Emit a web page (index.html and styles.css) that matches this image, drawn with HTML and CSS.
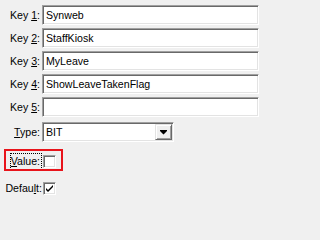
FILE: index.html
```html
<!DOCTYPE html>
<html>
<head>
<meta charset="utf-8">
<link rel="stylesheet" href="styles.css">
</head>
<body>
<div class="form">
  <label class="lbl">Key <u>1</u>:</label>
  <div class="field">Synweb</div>
  <label class="lbl">Key <u>2</u>:</label>
  <div class="field">StaffKiosk</div>
  <label class="lbl">Key <u>3</u>:</label>
  <div class="field">MyLeave</div>
  <label class="lbl">Key <u>4</u>:</label>
  <div class="field">ShowLeaveTakenFlag</div>
  <label class="lbl">Key <u>5</u>:</label>
  <div class="field"></div>
  <label class="lbl type-lbl"><u>T</u>ype:</label>
  <div class="select">
    <span class="select-text">BIT</span>
    <span class="drop">
      <svg width="7" height="5" viewBox="0 0 7 5"><path d="M0 0h7v1H0zM0 1h7L3.5 4.5z" fill="#000"/></svg>
    </span>
  </div>
  <label class="lbl value-lbl"><span class="focus"><u>V</u>alue:</span></label>
  <div class="check-cell value-cell"><span class="check"></span><span class="highlight"></span></div>
  <label class="lbl default-lbl">Defau<u>l</u>t:</label>
  <div class="check-cell default-cell">
    <span class="check">
      <svg width="9" height="9" viewBox="0 0 9 9"><path d="M1 4l2 2 5-5v2L3 8 1 6z" fill="#000"/></svg>
    </span>
  </div>
</div>
</body>
</html>
```
FILE: styles.css
```css
html, body {
  margin: 0;
  padding: 0;
  background: #f0f0f0;
}
body {
  font-family: "Liberation Sans", Arial, sans-serif;
  font-size: 10.6px;
  color: #000;
  width: 262px;
  height: 200px;
  overflow: hidden;
}
.form {
  display: grid;
  grid-template-columns: 40px 217px;
  column-gap: 2px;
  row-gap: 3px;
  padding-top: 5px;
  position: relative;
}
.lbl {
  text-align: right;
  height: 20px;
  line-height: 20px;
  white-space: nowrap;
}
.field {
  box-sizing: border-box;
  height: 20px;
  background: #fff;
  border-top: 1px solid #a0a0a0;
  border-left: 1px solid #a0a0a0;
  border-right: 1px solid #fff;
  border-bottom: 1px solid #fff;
  box-shadow: inset 1px 1px 0 #696969, inset -1px -1px 0 #e3e3e3;
  padding-left: 3px;
  line-height: 18px;
}
.type-lbl { margin-top: 2px; }
.select {
  margin-top: 2px;
  box-sizing: border-box;
  width: 132px;
  height: 20px;
  background: #fff;
  border-top: 1px solid #a0a0a0;
  border-left: 1px solid #a0a0a0;
  border-right: 1px solid #fff;
  border-bottom: 1px solid #fff;
  box-shadow: inset 1px 1px 0 #696969, inset -1px -1px 0 #e3e3e3;
  display: flex;
  align-items: center;
  padding: 1px;
}
.select-text {
  flex: 1;
  padding-left: 2px;
  line-height: 16px;
}
.drop {
  box-sizing: border-box;
  width: 17px;
  height: 16px;
  background: #f0f0f0;
  border-top: 1px solid #e3e3e3;
  border-left: 1px solid #e3e3e3;
  border-right: 1px solid #696969;
  border-bottom: 1px solid #696969;
  box-shadow: inset 1px 1px 0 #fff, inset -1px -1px 0 #a0a0a0;
  display: flex;
  align-items: center;
  justify-content: center;
}
.drop svg { display: block; margin-top: 1px; }
.value-lbl {
  margin-top: 8px;
  height: 16px;
  line-height: 16px;
}
.focus {
  display: inline-block;
  outline: 1px dotted #000;
  outline-offset: 0;
  padding: 0 1px 0 0;
  line-height: 15px;
  margin-right: -1px;
}
.check-cell {
  display: flex;
  align-items: center;
  height: 16px;
  position: relative;
}
.value-cell { margin-top: 8px; }
.default-lbl {
  margin-top: 6px;
  height: 20px;
  line-height: 20px;
  margin-right: -2px;
}
.default-cell { margin-top: 6px; height: 20px; }
.check {
  box-sizing: border-box;
  width: 13px;
  height: 13px;
  margin-left: 1px;
  background: #fff;
  border-top: 1px solid #a0a0a0;
  border-left: 1px solid #a0a0a0;
  border-right: 1px solid #fff;
  border-bottom: 1px solid #fff;
  box-shadow: inset 1px 1px 0 #696969, inset -1px -1px 0 #e3e3e3;
  display: flex;
  align-items: center;
  justify-content: center;
}
.check svg { display: block; }
.highlight {
  position: absolute;
  left: -38px;
  top: -4px;
  width: 55px;
  height: 18px;
  border: 2px solid #e8141b;
}
```
